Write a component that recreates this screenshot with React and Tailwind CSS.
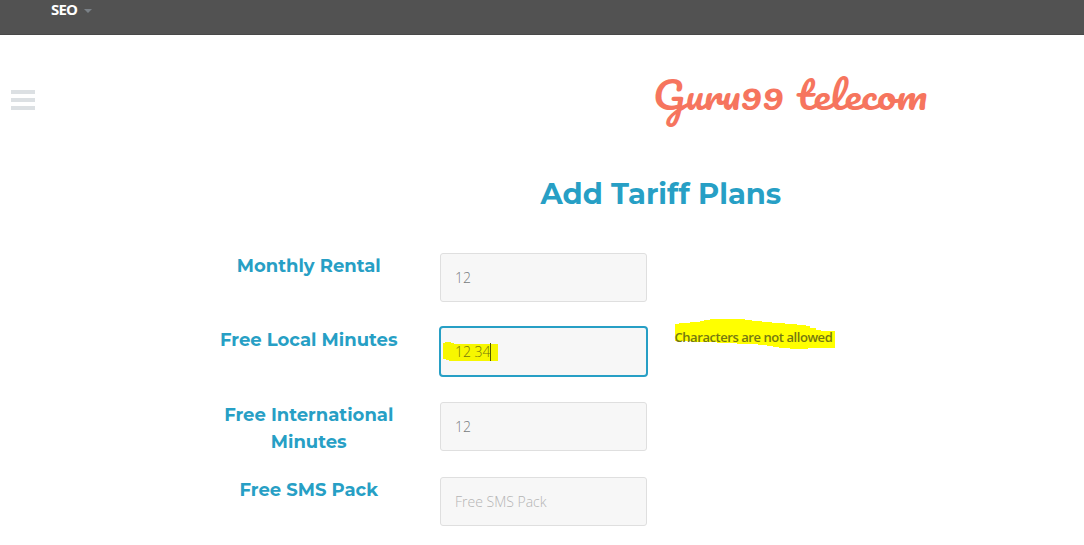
const labelClass =
  "w-[200px] text-center text-[18px] leading-[27px] font-bold text-[#279fc5] [font-family:Montserrat,Inter,sans-serif]";
const inputClass =
  "block h-[49px] w-[207px] rounded-[3px] border border-[#dfdfdf] bg-[#f7f7f7] px-[14px] text-[14px] font-light text-[#787b80] outline-none placeholder:text-[#b4b4b4] placeholder:opacity-100";

function Row({ label, children, note, className = "" }) {
  return (
    <div className={`flex items-start pl-[208.75px] ${className}`}>
      <div className={labelClass}>{label}</div>
      <div className="ml-[31.25px] w-[207px]">{children}</div>
      {note}
    </div>
  );
}

export default function App() {
  return (
    <div className="h-[545px] w-full overflow-hidden bg-white [font-family:'Open_Sans',sans-serif]">
      <nav className="flex h-[35px] items-start border-b border-[#484848] bg-[#525252] pl-[51px] text-white">
        <span className="w-[27px] text-[15px] leading-[19px] font-bold tracking-[-0.8px]">SEO</span>
        <svg className="mt-[9px] ml-[6px]" width="8" height="4" viewBox="0 0 8 4">
          <path d="M0 0h8L4 4z" fill="#7b8187" />
        </svg>
      </nav>

      <header className="flex h-[136px] items-start pl-[11px]">
        <button className="mt-[55px] flex w-[24px] flex-col gap-[4px]" aria-label="Menu">
          <span className="h-[4px] bg-[#dce0e3]" />
          <span className="h-[4px] bg-[#dce0e3]" />
          <span className="h-[4px] bg-[#dce0e3]" />
        </button>
        <svg className="mt-[20px] ml-[610px] overflow-visible" width="320" height="90" viewBox="0 0 320 90">
          <g fill="#f6755e" fontFamily="Pacifico, cursive" fontSize="36.5">
            <text x="8" y="54.5" textLength="131" lengthAdjust="spacingAndGlyphs">Guru99</text>
            <text x="151.5" y="54.5" textLength="131" lengthAdjust="spacingAndGlyphs">telecom</text>
          </g>
        </svg>
      </header>

      <main>
        <h1 className="h-[82px] pt-[4px] pl-[540.5px] text-[29px] leading-[38px] font-bold whitespace-nowrap text-[#279fc5] [font-family:Montserrat,Inter,sans-serif]">
          Add Tariff Plans
        </h1>
        <Row label="Monthly Rental" className="h-[74px]">
          <input className={inputClass} defaultValue="12" />
        </Row>
        <Row
          label="Free Local Minutes"
          className="h-[75px]"
          note={
            <div className="relative -mt-[8px] ml-[27px] h-[30px] w-[162px]">
              <svg className="absolute inset-0" width="162" height="30" viewBox="0 0 162 30" shapeRendering="crispEdges">
                <path
                  d="M1 5H5V4H16V3H26V2H30V1H36V0H71V1H78V2H88V3H98V4H111V5H123V6H132V7H136V9H142V11H147V12H161V29H134V30H116V29H105V28H99V27H93V26H84V25H63V24H43V23H20V22H1Z"
                  fill="#ff0"
                />
              </svg>
              <span className="relative block pt-[8px] pl-[0.5px] text-[13px] leading-[20px] font-semibold tracking-[-0.44px] whitespace-nowrap text-[#747812]">
                Characters are not allowed
              </span>
            </div>
          }
        >
          <div className="-mx-px -mt-px flex h-[51px] w-[209px] items-center rounded-[4px] border-2 border-[#279fc5] bg-[#f7f7f7]">
            <div className="relative ml-[2px] h-[19px] w-[55px]">
              <svg className="absolute inset-0" width="55" height="19" viewBox="0 0 55 19" shapeRendering="crispEdges">
                <path d="M0 1h2V0h6v1h3v1h44v17H6v-1H3v-1H0z" fill="#f7f700" />
              </svg>
              <span className="relative block pl-[12px] text-[14px] leading-[19px] font-light whitespace-nowrap text-[#74760e]">
                12 34
              </span>
              <span className="absolute top-[1px] left-[47px] h-[18px] w-px bg-[#555900]" />
            </div>
          </div>
        </Row>
        <Row
          label={
            <>
              Free International
              <br />
              Minutes
            </>
          }
          className="h-[75px]"
        >
          <input className={inputClass} defaultValue="12" />
        </Row>
        <Row label="Free SMS Pack">
          <input className={inputClass} placeholder="Free SMS Pack" />
        </Row>
      </main>
    </div>
  );
}
